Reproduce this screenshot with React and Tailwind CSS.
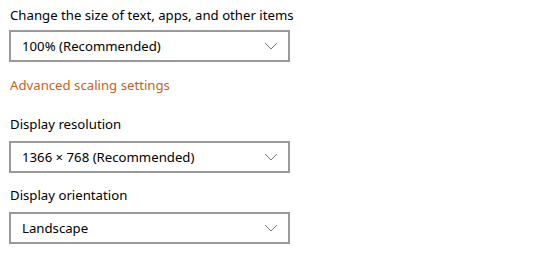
import React from 'react';

function Chevron() {
  return (
    <svg width="14" height="8" viewBox="0 0 14 8" className="text-[#7a7a7a]">
      <path d="M1 1 L7 7 L13 1" fill="none" stroke="currentColor" strokeWidth="1" />
    </svg>
  );
}

function Select({ value }) {
  return (
    <div className="w-[281px] h-[32px] border-2 border-[#999999] bg-white flex items-center justify-between pl-[11px] pr-[10px]">
      <span className="text-[13.2px] leading-5 text-black">{value}</span>
      <Chevron />
    </div>
  );
}

export default function App() {
  return (
    <div className="w-[557px] h-[267px] bg-white pl-[9px] pt-[5px] font-['Noto_Sans','Open_Sans',sans-serif] text-black">
      <div className="text-[13.2px] leading-5 pl-[1px]">Change the size of text, apps, and other items</div>
      <div className="mt-[5px]">
        <Select value="100% (Recommended)" />
      </div>
      <div className="mt-[13px] text-[13.2px] leading-5 text-[#c4621f] pl-[1px]">Advanced scaling settings</div>
      <div className="mt-[19px] text-[13.2px] leading-5 pl-[1px]">Display resolution</div>
      <div className="mt-[7px]">
        <Select value="1366 × 768 (Recommended)" />
      </div>
      <div className="mt-[12px] text-[13.2px] leading-5 pl-[1px]">Display orientation</div>
      <div className="mt-[7px]">
        <Select value="Landscape" />
      </div>
    </div>
  );
}
